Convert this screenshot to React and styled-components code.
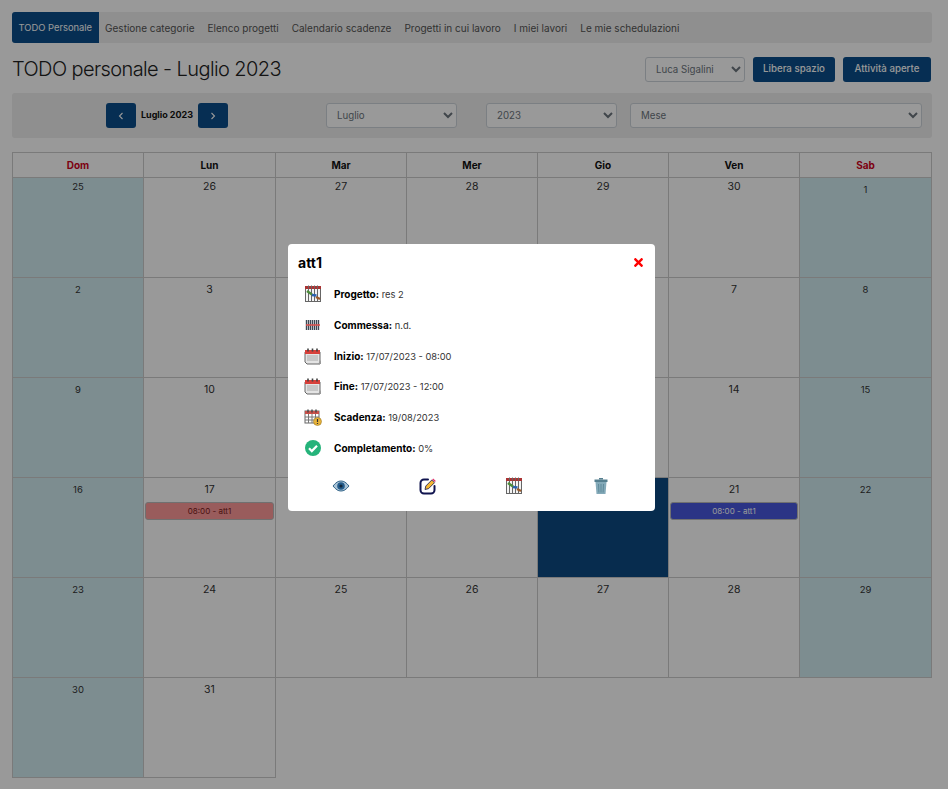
import styled, { createGlobalStyle } from "styled-components";
import { FaTimes } from "react-icons/fa";

const primary = "#0a4d8a";

const GlobalStyle = createGlobalStyle`
  html, body {
    margin: 0;
    padding: 0;
    background: #fff;
    font-family: Inter, "Open Sans", sans-serif;
    color: #212529;
  }
  * { box-sizing: border-box; }
`;

const Page = styled.div`
  padding: 12px 16px 11px 12px;
  min-height: 789px;
`;

const Nav = styled.nav`
  display: flex;
  height: 31px;
  background: #eee;
  border-radius: 3px;
`;

const Tab = styled.a`
  display: flex;
  align-items: center;
  padding: 0 6.5px;
  font-size: ${(p) => (p.$active ? 9.4 : 10)}px;
  color: ${(p) => (p.$active ? "#fff" : "#555")};
  background: ${(p) => (p.$active ? primary : "transparent")};
  border-radius: ${(p) => (p.$active ? "3px 0 0 3px" : "0")};
`;

const Header = styled.div`
  display: flex;
  align-items: center;
  height: 25px;
  margin-top: 14px;
  padding-right: 1px;
`;

const Title = styled.h1`
  flex: 1;
  margin: 0;
  font-size: 20px;
  letter-spacing: -0.6px;
  font-weight: 300;
  line-height: 25px;
  color: #222;
`;

const Select = styled.select`
  width: ${(p) => p.$width}px;
  height: 25px;
  margin-left: ${(p) => p.$gap || 0}px;
  padding: 0 6px;
  border: 1px solid #ced4da;
  border-radius: 3px;
  background-color: #fff;
  font-family: inherit;
  font-size: 9.7px;
  color: #6c757d;
`;

const Button = styled.button`
  height: 25px;
  width: ${(p) => p.$width}px;
  margin-left: 8px;
  padding: 0 0 2px;
  border: 0;
  border-radius: 3px;
  background: ${primary};
  color: #fff;
  font-family: inherit;
  font-size: 9.7px;
  font-weight: 500;
`;

const FilterBar = styled.div`
  display: flex;
  align-items: center;
  height: 45px;
  margin-top: 11px;
  padding-right: 10px;
  background: #eee;
  border-radius: 3px;
`;

const MonthNav = styled.div`
  width: 310px;
  margin-right: 4px;
  display: flex;
  align-items: center;
  justify-content: center;
  gap: 5px;
`;

const ArrowButton = styled.button`
  display: flex;
  align-items: center;
  justify-content: center;
  width: 30px;
  height: 25px;
  padding: 0;
  border: 0;
  border-radius: 3px;
  background: ${primary};
  color: #fff;
`;

const MonthLabel = styled.span`
  font-size: 9px;
  font-weight: 700;
  color: #111;
  white-space: nowrap;
  padding-bottom: 2px;
`;

const Calendar = styled.table`
  width: 919px;
  margin-top: 14px;
  border-collapse: collapse;
  table-layout: fixed;
`;

const Column = styled.col`
  width: ${(p) => p.$width}px;
`;

const HeadCell = styled.th`
  height: 25px;
  padding: 0;
  border: 1px solid #ccc;
  font-size: 10px;
  font-weight: 700;
  text-align: center;
  color: ${(p) => (p.$weekend ? "#d0021b" : "#111")};
`;

const DayCell = styled.td`
  height: 100px;
  padding: ${(p) => (p.$other ? "2px" : "5px")} 2px 0;
  border: 1px solid #ccc;
  vertical-align: top;
  text-align: center;
  background: ${(p) => (p.$today ? "#0d4a82" : p.$weekend ? "#d1ecf1" : "#fff")};
`;

const DayNumber = styled.div`
  height: 13px;
  line-height: 13px;
  font-size: ${(p) => (p.$weekend ? 9.5 : 10.5)}px;
  color: #333;
`;

const EventBar = styled.div`
  height: 18px;
  margin: 6px -1px 0;
  line-height: 16px;
  border: 1px solid #bbb;
  border-radius: 3px;
  font-size: 8px;
  text-align: center;
  background: ${(p) => (p.$tone === "blue" ? "#4858de" : "#ff9999")};
  color: ${(p) => (p.$tone === "blue" ? "#fff" : "#7a2020")};
`;

const Overlay = styled.div`
  position: fixed;
  inset: 0;
  background: rgba(0, 0, 0, 0.4);
`;

const Modal = styled.div`
  position: fixed;
  left: 288px;
  top: 244px;
  width: 367px;
  height: 267px;
  padding: 9px 10px 0;
  background: #fff;
  border-radius: 4px;
`;

const ModalHead = styled.div`
  display: flex;
  align-items: center;
  justify-content: space-between;
  height: 18px;
`;

const ModalTitle = styled.h2`
  margin: 0;
  font-size: 14px;
  font-weight: 700;
  color: #000;
`;

const CloseIcon = styled(FaTimes)`
  width: 13px;
  height: 13px;
  color: #f00;
`;

const InfoList = styled.div`
  margin-top: 8px;
`;

const InfoRow = styled.div`
  display: flex;
  align-items: center;
  height: 30.7px;
  padding-left: 6px;
  gap: 12px;
  font-size: 9.3px;
  color: #333;

  b {
    font-size: 10px;
    font-weight: 700;
    color: #000;
  }
`;

const Actions = styled.div`
  display: grid;
  grid-template-columns: repeat(4, 86.5px);
  margin-top: 14px;
  justify-items: center;
`;

const GanttIcon = () => (
  <svg width="18" height="18" viewBox="0 0 18 18">
    <rect x="1.5" y="2.5" width="15" height="14" fill="#f4f4f4" stroke="#666" />
    <rect x="1" y="1" width="16" height="3" fill="#a33" />
    {[4.5, 7.5, 10.5, 13.5].map((x) => (
      <path key={x} d={`M${x} 0.5v3M${x} 4v13`} stroke="#666" />
    ))}
    <path d="M3 6l5 3.5" stroke="#4c8c3a" strokeWidth="2.5" />
    <path d="M8 10l4.5.5" stroke="#2a62b0" strokeWidth="2.5" />
    <path d="M12 12l4 2" stroke="#9a5a2a" strokeWidth="2.5" />
  </svg>
);

const BarcodeIcon = () => (
  <svg width="18" height="18" viewBox="0 0 18 18">
    {[2.5, 4.5, 6.5, 8.5, 10.5, 12.5, 14.5].map((x) => (
      <path key={x} d={`M${x} 4v10`} stroke="#3c4854" strokeWidth="1.4" />
    ))}
    <path d="M2 9h14" stroke="#d9534f" strokeWidth="1.6" />
  </svg>
);

const CalendarIcon = () => (
  <svg width="18" height="18" viewBox="0 0 18 18">
    <path d="M1 5h15v12H3l-2-2z" fill="#e4e4e4" stroke="#666" />
    <rect x="1" y="3" width="15" height="4" fill="#d8403a" />
    <path d="M4 1.5v3M8.5 1.5v3M13 1.5v3" stroke="#444" strokeWidth="1.6" />
    <path d="M3 9h11M3 11h11M3 13h11" stroke="#aaa" />
    <path d="M14 17l3-4v4z" fill="#999" />
  </svg>
);

const DeadlineIcon = () => (
  <svg width="18" height="18" viewBox="0 0 18 18">
    <rect x="1" y="3" width="14" height="12" fill="#fff" stroke="#666" />
    <rect x="1" y="3" width="14" height="3" fill="#c9504a" />
    <path d="M4 1.5v3M8 1.5v3M12 1.5v3" stroke="#444" strokeWidth="1.4" />
    <path d="M1 9h14M1 12h14M4.5 6v9M8 6v9M11.5 6v9" stroke="#777" />
    <circle cx="13.5" cy="13.5" r="4" fill="#e8b33a" stroke="#8a6a1a" strokeWidth="0.5" />
    <path d="M13.5 11v3M13.5 15v1" stroke="#333" strokeWidth="1.2" />
  </svg>
);

const CheckIcon = () => (
  <svg width="18" height="18" viewBox="0 0 18 18">
    <circle cx="9" cy="9" r="8" fill="#25b37a" />
    <path d="M5 9.3l2.8 2.8L13 6.8" fill="none" stroke="#fff" strokeWidth="2.2" />
  </svg>
);

const EyeIcon = () => (
  <svg width="18" height="18" viewBox="0 0 18 18">
    <path d="M1 9c3-3.6 5-5 8-5s5 1.4 8 5c-3 3.6-5 5-8 5s-5-1.4-8-5z" fill="#a9c3d6" stroke="#33658a" />
    <circle cx="9" cy="9" r="3.8" fill="#235b8a" />
    <circle cx="9" cy="9" r="1.6" fill="#12263a" />
  </svg>
);

const EditIcon = () => (
  <svg width="18" height="18" viewBox="0 0 18 18">
    <path d="M9 2.5H5a3.5 3.5 0 0 0-3.5 3.5v7A3.5 3.5 0 0 0 5 16.500h7a3.500 3.500 0 0 0 3.500-3.500V9" fill="none" stroke="#10144f" strokeWidth="2" strokeLinecap="round" />
    <path d="M6 12.500l.8-3.500 6-6 2.700 2.700-6 6z" fill="#f5b731" stroke="#10144f" strokeWidth="0.8" />
    <path d="M13.200 2.500l1-1 2.600 2.600-1 1z" fill="#e0336b" />
  </svg>
);

const TrashIcon = () => (
  <svg width="18" height="18" viewBox="0 0 18 18">
    <path d="M7 1h4v1.500H7z" fill="#557f8f" />
    <path d="M2.500 2.500h13v2.500h-13z" fill="#557f8f" />
    <path d="M3.500 5h11l-1 12h-9z" fill="#84aab9" />
    <path d="M6.500 7l.4 8.500M9 7v8.500M11.500 7l-.4 8.500" stroke="#5f8a9a" />
  </svg>
);

const Chevron = ({ d }) => (
  <svg width="8" height="10" viewBox="0 0 8 10" fill="none" stroke="#fff" strokeWidth="1.1">
    <path d={d} />
  </svg>
);

const columnWidths = [131, 132, 131, 131, 131, 131, 132];
const weekdays = ["Dom", "Lun", "Mar", "Mer", "Gio", "Ven", "Sab"];
const weeks = [
  [25, 26, 27, 28, 29, 30, 1],
  [2, 3, 4, 5, 6, 7, 8],
  [9, 10, 11, 12, 13, 14, 15],
  [16, 17, 18, 19, 20, 21, 22],
  [23, 24, 25, 26, 27, 28, 29],
  [30, 31],
];

const tabs = [
  "TODO Personale",
  "Gestione categorie",
  "Elenco progetti",
  "Calendario scadenze",
  "Progetti in cui lavoro",
  "I miei lavori",
  "Le mie schedulazioni",
];

const details = [
  [GanttIcon, "Progetto:", "res 2"],
  [BarcodeIcon, "Commessa:", "n.d."],
  [CalendarIcon, "Inizio:", "17/07/2023 - 08:00"],
  [CalendarIcon, "Fine:", "17/07/2023 - 12:00"],
  [DeadlineIcon, "Scadenza:", "19/08/2023"],
  [CheckIcon, "Completamento:", "0%"],
];

export default function App() {
  return (
    <>
      <GlobalStyle />
      <Page>
        <Nav>
          {tabs.map((tab, i) => (
            <Tab key={tab} $active={i === 0}>
              {tab}
            </Tab>
          ))}
        </Nav>

        <Header>
          <Title>TODO personale - Luglio 2023</Title>
          <Select $width={100}>
            <option>Luca Sigalini</option>
          </Select>
          <Button $width={82}>Libera spazio</Button>
          <Button $width={88}>Attività aperte</Button>
        </Header>

        <FilterBar>
          <MonthNav>
            <ArrowButton>
              <Chevron d="M5.500 2L2.500 5l3 3" />
            </ArrowButton>
            <MonthLabel>Luglio 2023</MonthLabel>
            <ArrowButton>
              <Chevron d="M2.500 2l3 3-3 3" />
            </ArrowButton>
          </MonthNav>
          <Select $width={131}>
            <option>Luglio</option>
          </Select>
          <Select $width={131} $gap={29}>
            <option>2023</option>
          </Select>
          <Select $width={292} $gap={13}>
            <option>Mese</option>
          </Select>
        </FilterBar>

        <Calendar>
          <colgroup>
            {columnWidths.map((width, i) => (
              <Column key={i} $width={width} />
            ))}
          </colgroup>
          <thead>
            <tr>
              {weekdays.map((day, i) => (
                <HeadCell key={day} $weekend={i === 0 || i === 6}>
                  {day}
                </HeadCell>
              ))}
            </tr>
          </thead>
          <tbody>
            {weeks.map((week, w) => (
              <tr key={w}>
                {week.map((day, i) => {
                  const weekend = i === 0 || i === 6;
                  const other = w === 0 && day > 7;
                  return (
                    <DayCell
                      key={i}
                      $weekend={weekend}
                      $other={other}
                      $today={w === 3 && i === 4}
                    >
                      <DayNumber $weekend={weekend}>{day}</DayNumber>
                      {w === 3 && i === 1 && <EventBar>08:00 - att1</EventBar>}
                      {w === 3 && i === 5 && (
                        <EventBar $tone="blue">08:00 - att1</EventBar>
                      )}
                    </DayCell>
                  );
                })}
              </tr>
            ))}
          </tbody>
        </Calendar>
      </Page>

      <Overlay />
      <Modal>
        <ModalHead>
          <ModalTitle>att1</ModalTitle>
          <CloseIcon />
        </ModalHead>
        <InfoList>
          {details.map(([Icon, label, value]) => (
            <InfoRow key={label}>
              <Icon />
              <span>
                <b>{label}</b> {value}
              </span>
            </InfoRow>
          ))}
        </InfoList>
        <Actions>
          <EyeIcon />
          <EditIcon />
          <GanttIcon />
          <TrashIcon />
        </Actions>
      </Modal>
    </>
  );
}
